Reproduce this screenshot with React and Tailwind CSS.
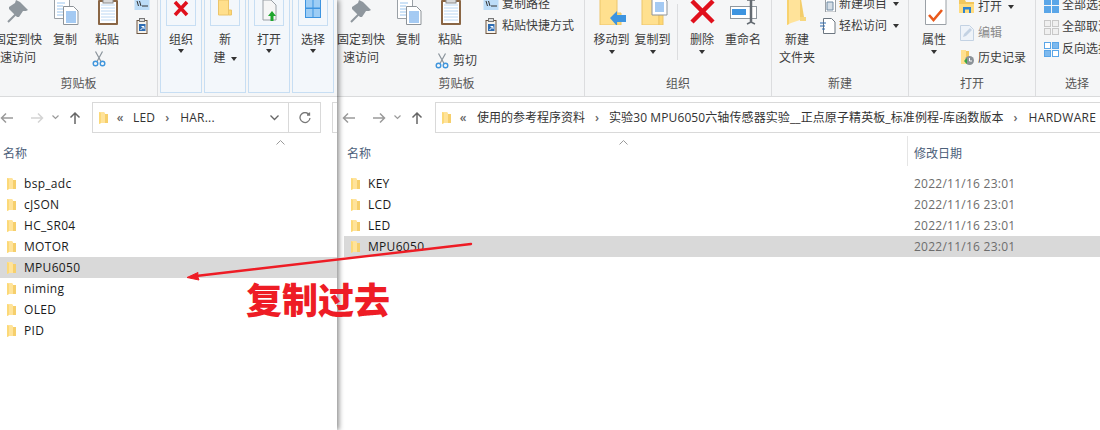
const FONT = "font-['Open_Sans','Noto_Sans_CJK_SC',sans-serif]";

function Caret() {
  return <span className="inline-block w-0 h-0 border-x-[3.5px] border-x-transparent border-t-[4px] border-t-[#333]" />;
}
function FolderIcon() {
  return (
    <svg className="w-[12px] h-[14px] shrink-0" viewBox="0 0 12 14">
      <path d="M2 1h5l1 1v10H4l-2 1z" fill="#ffe39a" />
      <path d="M8 3h3v9H8z" fill="#f6cf6c" />
      <path d="M2 1v12l2-1V2z" fill="#fcd978" />
    </svg>
  );
}
function PinIcon() {
  return (
    <svg className="w-[32px] h-[32px]" viewBox="0 0 32 32">
      <path d="M6 29l9-9" stroke="#8f979e" strokeWidth="2" />
      <path d="M18 9l8 8-2 1-3 0-4 6-2 0-8-8 0-2 6-4 1-3z" fill="#8f979e" />
    </svg>
  );
}
function CopyIcon() {
  return (
    <svg className="w-[32px] h-[32px]" viewBox="0 0 32 32">
      <path d="M5.500 2.500h11l4 4v19h-15z" fill="#fff" stroke="#9aa0a6" />
      <path d="M8 10h8M8 13h6M8 16h6M8 19h6M8 22h6" stroke="#9cc6ef" />
      <path d="M14.500 13.500h10l4.500 4.500v13.500h-14.500z" fill="#fff" stroke="#8d9399" />
      <path d="M17 19h10M17 21h10M17 23h10M17 25h10M17 27h10M17 29h10" stroke="#4a95e6" />
    </svg>
  );
}
function ClipIcon() {
  return (
    <svg className="w-[32px] h-[32px]" viewBox="0 0 32 32">
      <rect x="7" y="7" width="20" height="25" rx="1" fill="#8a6645" />
      <rect x="9" y="9" width="16" height="21" fill="#fff" />
      <path d="M10 12h14M10 15h14M10 18h14M10 21h14M10 24h14M10 27h14" stroke="#bcd8f3" />
      <rect x="12" y="4" width="10" height="6" fill="#d9d9d9" stroke="#8a8a8a" />
    </svg>
  );
}
function ScissorsIcon() {
  return (
    <svg className="w-[16px] h-[16px]" viewBox="0 0 16 16" fill="none">
      <path d="M4.500 0.500l5.500 10M11.500 0.500L6 10.500" stroke="#8a939b" strokeWidth="1.200" />
      <circle cx="4.500" cy="12.500" r="2.300" stroke="#3f95dc" strokeWidth="1.400" />
      <circle cx="11.500" cy="12.500" r="2.300" stroke="#3f95dc" strokeWidth="1.400" />
    </svg>
  );
}
function PathIcon() {
  return (
    <svg className="w-[16px] h-[14px]" viewBox="0 0 16 14">
      <rect x="0.500" y="1" width="15" height="12" fill="#bcdcf7" />
      <path d="M3 4l1.500 5M5.500 4L7 9M8 9h6" stroke="#333" strokeWidth="1" fill="none" />
    </svg>
  );
}
function ShortcutIcon() {
  return (
    <svg className="w-[12px] h-[16px]" viewBox="0 0 12 16">
      <rect x="1" y="2.500" width="10" height="13" fill="#f7f3ec" stroke="#6c5540" />
      <rect x="3.500" y="0.500" width="5" height="3" fill="#ddd" stroke="#777" />
      <rect x="3" y="6" width="6.500" height="7" fill="#2f6db3" />
      <path d="M4.500 12l3-3M5.500 8.500h2.500V11" stroke="#fff" fill="none" />
    </svg>
  );
}
function DeleteIcon() {
  return (
    <svg className="w-[32px] h-[32px]" viewBox="0 0 32 32">
      <path d="M6 8l21 21M27 8L6 29" stroke="#e0101c" strokeWidth="4.500" />
    </svg>
  );
}
function SmallDelete() {
  return (
    <svg className="w-[16px] h-[22px]" viewBox="0 0 16 22">
      <path d="M2 2l12 13M14 2L2 15" stroke="#e0101c" strokeWidth="3.500" />
    </svg>
  );
}
function BigFolder({ x = 4, children }) {
  return (
    <svg className="w-[32px] h-[32px]" viewBox="0 0 32 32">
      <path d={`M${x} 0h17v32H${x}z`} fill="#ffe08f" stroke="#ecc56b" />
      <path d={`M${x + 17} 20h4v12h-4z`} fill="#ffd873" stroke="#ecc56b" />
      {children}
    </svg>
  );
}
function MoveIcon() {
  return (
    <BigFolder>
      <path d="M14 25l7-7v4h9v7h-9v4z" fill="#3d94e0" />
    </BigFolder>
  );
}
function CopyToIcon() {
  return (
    <BigFolder x={5}>
      <path d="M15 4h11l4 4v14H15z" fill="#fff" stroke="#8d9399" />
      <path d="M18 10h9M18 12h9M18 14h9M18 16h9M18 18h9" stroke="#4a95e6" />
    </BigFolder>
  );
}
function RenameIcon() {
  return (
    <svg className="w-[32px] h-[32px]" viewBox="0 0 32 32">
      <rect x="3.500" y="13.500" width="26" height="12" fill="#fff" stroke="#8f979e" />
      <rect x="5" y="16" width="14" height="6" fill="#3d94e0" />
      <path d="M24 7v23" stroke="#646b72" strokeWidth="2.500" />
      <path d="M20 7h8M20 31l4-2 4 2" stroke="#646b72" strokeWidth="1.500" fill="none" />
    </svg>
  );
}
function NewFolderIcon() {
  return (
    <svg className="w-[32px] h-[32px]" viewBox="0 0 32 32">
      <path d="M6 0h13v27l-9 3-4 2z" fill="#ffe39a" />
      <path d="M19 0l4 24-4 4z" fill="#f3cd6b" />
      <path d="M19 24h6v4h-6z" fill="#f7d77e" />
      <path d="M6 0v32l2-1V0z" fill="#f8d26e" />
    </svg>
  );
}
function NewItemIcon() {
  return (
    <svg className="w-[16px] h-[16px]" viewBox="0 0 16 16">
      <path d="M5.500 0h7l3 3v13h-10z" fill="#fff" stroke="#9aa0a6" />
      <path d="M7 6h6v8H7z" fill="#d5dee6" stroke="#6f8aa3" />
      <path d="M0 2h4M2 0v4" stroke="#3d94e0" />
    </svg>
  );
}
function EasyIcon() {
  return (
    <svg className="w-[16px] h-[16px]" viewBox="0 0 16 16">
      <path d="M3.500 0.500h8l3.500 3.500v11.500H3.500z" fill="#fff" stroke="#6c7680" />
      <path d="M0 5h6M0 8h5M2 11h3" stroke="#2f6db3" />
    </svg>
  );
}
function PropIcon() {
  return (
    <svg className="w-[32px] h-[32px]" viewBox="0 0 32 32">
      <path d="M7.500 0.500h15l5.500 5.500v25.500H7.500z" fill="#fff" stroke="#9aa0a6" />
      <path d="M11 22l4.500 5 8.500-10" stroke="#e95a1c" strokeWidth="2.600" fill="none" />
    </svg>
  );
}
function OpenIcon() {
  return (
    <svg className="w-[16px] h-[14px]" viewBox="0 0 16 14">
      <path d="M0 0h6l1 2h8v11H0z" fill="#f2c75c" />
      <path d="M0 4h15v9H0z" fill="#ffdc7e" />
      <path d="M4 7h8v6h-2V9.500H6V13H4z" fill="#2f83d0" />
    </svg>
  );
}
function EditIcon() {
  return (
    <svg className="w-[16px] h-[16px]" viewBox="0 0 16 16">
      <path d="M1.500 0.500h9l4 4v11h-13z" fill="#eef3f9" stroke="#c3d2e3" />
      <path d="M4 12l1-3 6-6 2 2-6 6z" fill="#c3d2e3" />
    </svg>
  );
}
function HistoryIcon() {
  return (
    <svg className="w-[16px] h-[16px]" viewBox="0 0 16 16">
      <path d="M2 0h5v14H2z" fill="#ffe08f" />
      <path d="M7 1h3v9H7z" fill="#f2c75c" />
      <circle cx="10.500" cy="10.500" r="4.500" fill="#8b9298" />
      <path d="M5 11l3-3v6z" fill="#39a845" />
      <path d="M10.500 8v3H13" stroke="#fff" fill="none" />
    </svg>
  );
}
function SelectIcon({ tint = "all" }) {
  const c = tint === "none" ? ["#f0f0f0", "#f0f0f0", "#f0f0f0", "#f0f0f0"] : tint === "inv" ? ["#fff", "#7db9ee", "#7db9ee", "#fff"] : ["#5aa6e8", "#5aa6e8", "#5aa6e8", "#5aa6e8"];
  const s = tint === "none" ? "#c8c8c8" : "#5aa6e8";
  return (
    <svg className="w-[15px] h-[15px]" viewBox="0 0 15 15">
      <rect x="0.500" y="0.500" width="6" height="6" fill={c[0]} stroke={s} />
      <rect x="8.500" y="0.500" width="6" height="6" fill={c[1]} stroke={s} />
      <rect x="0.500" y="8.500" width="6" height="6" fill={c[2]} stroke={s} />
      <rect x="8.500" y="8.500" width="6" height="6" fill={c[3]} stroke={s} />
    </svg>
  );
}
function GreenOpenIcon() {
  return (
    <svg className="w-[20px] h-[22px]" viewBox="0 0 20 22">
      <path d="M4 0h8l5 5v15H4z" fill="#f6f6f6" stroke="#9aa0a6" />
      <path d="M13 11l4 5h-2.500v5h-3v-5H9z" fill="#1ea62e" />
    </svg>
  );
}
function GridIcon() {
  return (
    <svg className="w-[20px] h-[22px]" viewBox="0 0 20 22">
      <rect x="2" y="0" width="16" height="18" fill="#3d94e0" />
      <path d="M3 0h6.500v7.500H3zM10.500 0H17v7.500h-6.500zM3 9h6.500v8H3zM10.500 9H17v8h-6.500z" fill="#9dcdf5" />
    </svg>
  );
}
function SmallFolderNew() {
  return (
    <svg className="w-[20px] h-[22px]" viewBox="0 0 20 22">
      <path d="M3.500 0h10v15h-10z" fill="#ffdf8c" stroke="#ecc56b" />
      <path d="M13.500 10h3v5h-3z" fill="#ffd873" stroke="#ecc56b" />
    </svg>
  );
}

function BigBtn({ icon, lines, caret, w = "w-[40px]" }) {
  return (
    <div className={`flex flex-col items-center shrink-0 ${w}`}>
      <div className="h-[32px] flex items-center justify-center">{icon}</div>
      <div className="mt-[6px] text-center leading-[18px] whitespace-nowrap">
        {lines.map((l) => (
          <div key={l}>{l}</div>
        ))}
      </div>
      {caret && <div className="flex leading-none mt-[1px]"><Caret /></div>}
    </div>
  );
}
function SmallRow({ icon, text, caret, className = "", h = "h-[22px]" }) {
  return (
    <div className={`flex items-center whitespace-nowrap ${h} ${className}`}>
      <span className="w-[16px] mr-[3px] flex justify-center shrink-0">{icon}</span>
      <span>{text}</span>
      {caret && <span className="ml-[6px] flex"><Caret /></span>}
    </div>
  );
}
function Group({ w, label, children, last }) {
  return (
    <div className={`flex flex-col shrink-0 h-full ${w} ${last ? "" : "border-r border-[#dcdddf]"}`}>
      <div className="flex-1 flex min-h-0 -mt-[7px]">{children}</div>
      <div className="h-[21px] pb-[3px] leading-[18px] text-center text-[#555]">{label}</div>
    </div>
  );
}
function Collapsed({ icon, label, extra }) {
  return (
    <div className="w-[42px] h-[94px] -mt-[1px] shrink-0 border border-[#c7def3] bg-[#f3f7fb] flex flex-col items-center">
      <div className="w-[30px] h-[26px] border border-[#c7def3] border-t-0 flex items-start justify-center overflow-hidden">{icon}</div>
      <div className="mt-[5px] leading-[18px] text-center">{label}</div>
      {extra}
    </div>
  );
}
function Nav({ dimForward }) {
  return (
    <>
      <svg className="w-[14px] h-[12px] shrink-0" viewBox="0 0 14 12" fill="none" stroke="#9a9a9a" strokeWidth="1.500"><path d="M13 6H2M6 1.500L1.500 6 6 10.500" /></svg>
      <svg className="w-[14px] h-[12px] shrink-0 ml-[16px]" viewBox="0 0 14 12" fill="none" stroke={dimForward ? "#d4d4d4" : "#9a9a9a"} strokeWidth="1.500"><path d="M1 6h11M8 1.500L12.500 6 8 10.500" /></svg>
      <svg className="w-[7px] h-[5px] shrink-0 ml-[8px]" viewBox="0 0 7 5" fill="none" stroke="#9a9a9a" strokeWidth="1.200"><path d="M0.500 0.500L3.500 3.500 6.500 0.500" /></svg>
      <svg className="w-[12px] h-[14px] shrink-0 ml-[10px]" viewBox="0 0 12 14" fill="none" stroke="#666" strokeWidth="1.500"><path d="M6 13V2M1.500 6.500L6 2l4.500 4.500" /></svg>
    </>
  );
}
function Crumb({ dir = "left" }) {
  return <span className="inline-block text-[#666] font-semibold w-[14px] text-center shrink-0">{dir === "left" ? "«" : "›"}</span>;
}
function Row({ name, date, selected, pad = "pl-[5px]" }) {
  return (
    <div className={`h-[21px] flex items-center ${pad} ${selected ? "bg-[#d9d9d9]" : ""}`}>
      <FolderIcon />
      <span className="ml-[7px] text-[#1a1a1a] tracking-[0.3px]">{name}</span>
      {date && <span className="ml-auto w-[186px] text-[#6d6d6d] shrink-0 tracking-[0.25px]">{date}</span>}
    </div>
  );
}

const leftFiles = ["bsp_adc", "cJSON", "HC_SR04", "MOTOR", "MPU6050", "niming", "OLED", "PID"];
const rightFiles = ["KEY", "LCD", "LED", "MPU6050"];

function LeftPane() {
  return (
    <div className="w-[337px] shrink-0 h-full relative z-10 bg-white shadow-[2px_0_5px_rgba(0,0,0,0.45)] overflow-hidden">
      <div className="h-[97px] bg-[#f5f6f7] border-b border-[#dadbdc] flex overflow-hidden">
        <Group w="w-[158px]" label="剪贴板">
          <div className="-ml-[6px] flex">
            <BigBtn w="w-[48px]" icon={<PinIcon />} lines={["固定到快", "速访问"]} />
            <BigBtn w="w-[46px]" icon={<CopyIcon />} lines={["复制"]} />
            <div className="flex flex-col items-center w-[38px] shrink-0">
              <BigBtn w="w-[38px]" icon={<ClipIcon />} lines={["粘贴"]} />
              <div className="-ml-[17px] mt-[2px]"><ScissorsIcon /></div>
            </div>
            <div className="flex flex-col ml-[6px] mt-[4px] gap-[7px] items-center w-[20px]">
              <PathIcon />
              <ShortcutIcon />
            </div>
          </div>
        </Group>
        <div className="flex gap-[2px] ml-[2px]">
          <Collapsed icon={<SmallDelete />} label="组织" extra={<Caret />} />
          <Collapsed icon={<SmallFolderNew />} label="新" extra={<div className="leading-[18px]">建 <span className="inline-flex align-middle ml-[2px]"><Caret /></span></div>} />
          <Collapsed icon={<GreenOpenIcon />} label="打开" extra={<Caret />} />
          <Collapsed icon={<GridIcon />} label="选择" extra={<Caret />} />
        </div>
      </div>
      <div className="h-[36px] flex items-center pt-[5px]">
        <div className="flex items-center w-[92px] shrink-0"><Nav dimForward /></div>
        <div className="w-[229px] h-[31px] shrink-0 border border-[#d9d9d9] flex items-center pl-[4px]">
          <FolderIcon />
          <span className="ml-[4px]"><Crumb /></span>
          <span className="ml-[6px] text-[#333] tracking-[0.2px]">LED</span>
          <span className="ml-[5px]"><Crumb dir="right" /></span>
          <span className="ml-[6px] text-[#333] tracking-[0.2px]">HAR...</span>
          <svg className="w-[9px] h-[6px] ml-auto mr-[9px]" viewBox="0 0 9 6" fill="none" stroke="#666" strokeWidth="1.300"><path d="M0.500 0.500L4.500 4.500 8.500 0.500" /></svg>
          <div className="w-[32px] h-full border-l border-[#d9d9d9] flex items-center justify-center">
            <svg className="w-[12px] h-[12px]" viewBox="0 0 12 12" fill="none" stroke="#777" strokeWidth="1.300"><path d="M10 2.500A5 5 0 1 0 11 6M10.500 0.500V3H8" /></svg>
          </div>
        </div>
        <div className="ml-[11px] flex-1 h-[31px] border border-r-0 border-[#d9d9d9]" />
      </div>
      <div className="h-[35px] relative pt-[12px] pl-[3px] text-[#4c607a] leading-[18px]">
        名称
        <svg className="w-[9px] h-[5px] absolute left-[276px] top-[7px]" viewBox="0 0 9 5" fill="none" stroke="#9a9a9a"><path d="M0.500 4.500L4.500 0.500 8.500 4.500" /></svg>
      </div>
      <div className="mt-[5px]">
        {leftFiles.map((f) => (
          <Row key={f} name={f} selected={f === "MPU6050"} />
        ))}
      </div>
    </div>
  );
}

function RightPane() {
  return (
    <div className="flex-1 min-w-0 h-full overflow-hidden bg-white">
      <div className="h-[97px] bg-[#f5f6f7] border-b border-[#dadbdc] flex overflow-hidden">
        <Group w="w-[248px]" label={<span className="block pr-[8px]">剪贴板</span>}>
          <BigBtn w="w-[48px]" icon={<PinIcon />} lines={["固定到快", "速访问"]} />
          <BigBtn w="w-[46px]" icon={<CopyIcon />} lines={["复制"]} />
          <div className="flex flex-col items-center w-[38px] shrink-0">
            <BigBtn w="w-[38px]" icon={<ClipIcon />} lines={["粘贴"]} />
            <SmallRow className="mt-[1px] ml-[11px]" icon={<ScissorsIcon />} text="剪切" />
          </div>
          <div className="flex flex-col ml-[14px] shrink-0">
            <SmallRow icon={<PathIcon />} text="复制路径" />
            <SmallRow icon={<ShortcutIcon />} text="粘贴快捷方式" />
          </div>
        </Group>
        <Group w="w-[187px]" label="组织">
          <div className="pl-[6px] flex">
            <BigBtn w="w-[41px]" icon={<MoveIcon />} lines={["移动到"]} caret />
            <BigBtn w="w-[41px]" icon={<CopyToIcon />} lines={["复制到"]} caret />
            <div className="w-px h-[56px] bg-[#dcdddf] ml-[4px] mt-[11px]" />
            <BigBtn w="w-[48px]" icon={<DeleteIcon />} lines={["删除"]} caret />
            <BigBtn w="w-[34px]" icon={<RenameIcon />} lines={["重命名"]} />
          </div>
        </Group>
        <Group w="w-[137px]" label="新建">
          <div className="pl-[5px] flex">
            <BigBtn w="w-[40px]" icon={<NewFolderIcon />} lines={["新建", "文件夹"]} />
            <div className="flex flex-col ml-[3px]">
              <SmallRow icon={<NewItemIcon />} text="新建项目" caret />
              <SmallRow icon={<EasyIcon />} text="轻松访问" caret />
            </div>
          </div>
        </Group>
        <Group w="w-[127px]" label="打开">
          <div className="pl-[5px] flex">
            <BigBtn w="w-[40px]" icon={<PropIcon />} lines={["属性"]} caret />
            <div className="flex flex-col ml-[5px] mt-[1px]">
              <SmallRow icon={<OpenIcon />} text="打开" caret h="h-[26px]" />
              <SmallRow icon={<EditIcon />} text={<span className="text-[#8a8a8a]">编辑</span>} h="h-[25px]" />
              <SmallRow icon={<HistoryIcon />} text="历史记录" h="h-[25px]" />
            </div>
          </div>
        </Group>
        <Group w="w-[64px]" label={<span className="block pl-[18px]">选择</span>} last>
          <div className="pl-[7px] flex flex-col mt-[1px]">
            <SmallRow icon={<SelectIcon />} text="全部选择" />
            <SmallRow icon={<SelectIcon tint="none" />} text="全部取消" />
            <SmallRow icon={<SelectIcon tint="inv" />} text="反向选择" />
          </div>
        </Group>
      </div>
      <div className="h-[36px] flex items-center pl-[5px] pt-[5px]">
        <div className="flex items-center w-[93px] shrink-0"><Nav /></div>
        <div className="flex-1 min-w-0 h-[31px] border border-r-0 border-[#d9d9d9] flex items-center pl-[4px] whitespace-nowrap overflow-hidden text-[#333]">
          <FolderIcon />
          <span className="ml-[4px]"><Crumb /></span>
          <span className="ml-[7px]">使用的参考程序资料</span>
          <span className="ml-[5px]"><Crumb dir="right" /></span>
          <span className="ml-[5px] tracking-[0.1px]">实验30 MPU6050六轴传感器实验__正点原子精英板_标准例程-库函数版本</span>
          <span className="ml-[5px]"><Crumb dir="right" /></span>
          <span className="ml-[6px] tracking-[0.3px]">HARDWARE</span>
        </div>
      </div>
      <div className="h-[35px] relative pt-[12px] pl-[10px] text-[#4c607a] leading-[18px] flex">
        <span>名称</span>
        <svg className="w-[9px] h-[5px] absolute left-[282px] top-[7px]" viewBox="0 0 9 5" fill="none" stroke="#9a9a9a"><path d="M0.500 4.500L4.500 0.500 8.500 4.500" /></svg>
        <div className="ml-auto w-[193px] h-[30px] -mt-[9px] border-l border-[#e5e5e5] pl-[6px] pt-[9px]">修改日期</div>
      </div>
      <div className="mt-[5px] pl-[7px]">
        {rightFiles.map((f) => (
          <Row key={f} name={f} date="2022/11/16 23:01" selected={f === "MPU6050"} pad="pl-[5px]" />
        ))}
      </div>
    </div>
  );
}

export default function App() {
  return (
    <div className={`relative w-[1100px] h-[430px] overflow-hidden flex bg-white text-[12px] text-[#3c3c3c] ${FONT}`}>
      <LeftPane />
      <RightPane />
      {/* red annotation over both windows */}
      <svg className="absolute left-0 top-0 z-20 pointer-events-none" width="1100" height="430" viewBox="0 0 1100 430">
        <path d="M471 244L196 276" stroke="#ee1c25" strokeWidth="2.400" strokeLinecap="round" />
        <path d="M187 277.500L198 272.500L197.500 276L199 280z" fill="#ee1c25" stroke="#ee1c25" />
      </svg>
      <div className="absolute z-20 left-[246px] top-[276px] text-[36px] leading-[44px] font-black text-[#ee1c25] font-['Noto_Sans_CJK_SC',sans-serif] whitespace-nowrap">
        复制过去
      </div>
    </div>
  );
}
